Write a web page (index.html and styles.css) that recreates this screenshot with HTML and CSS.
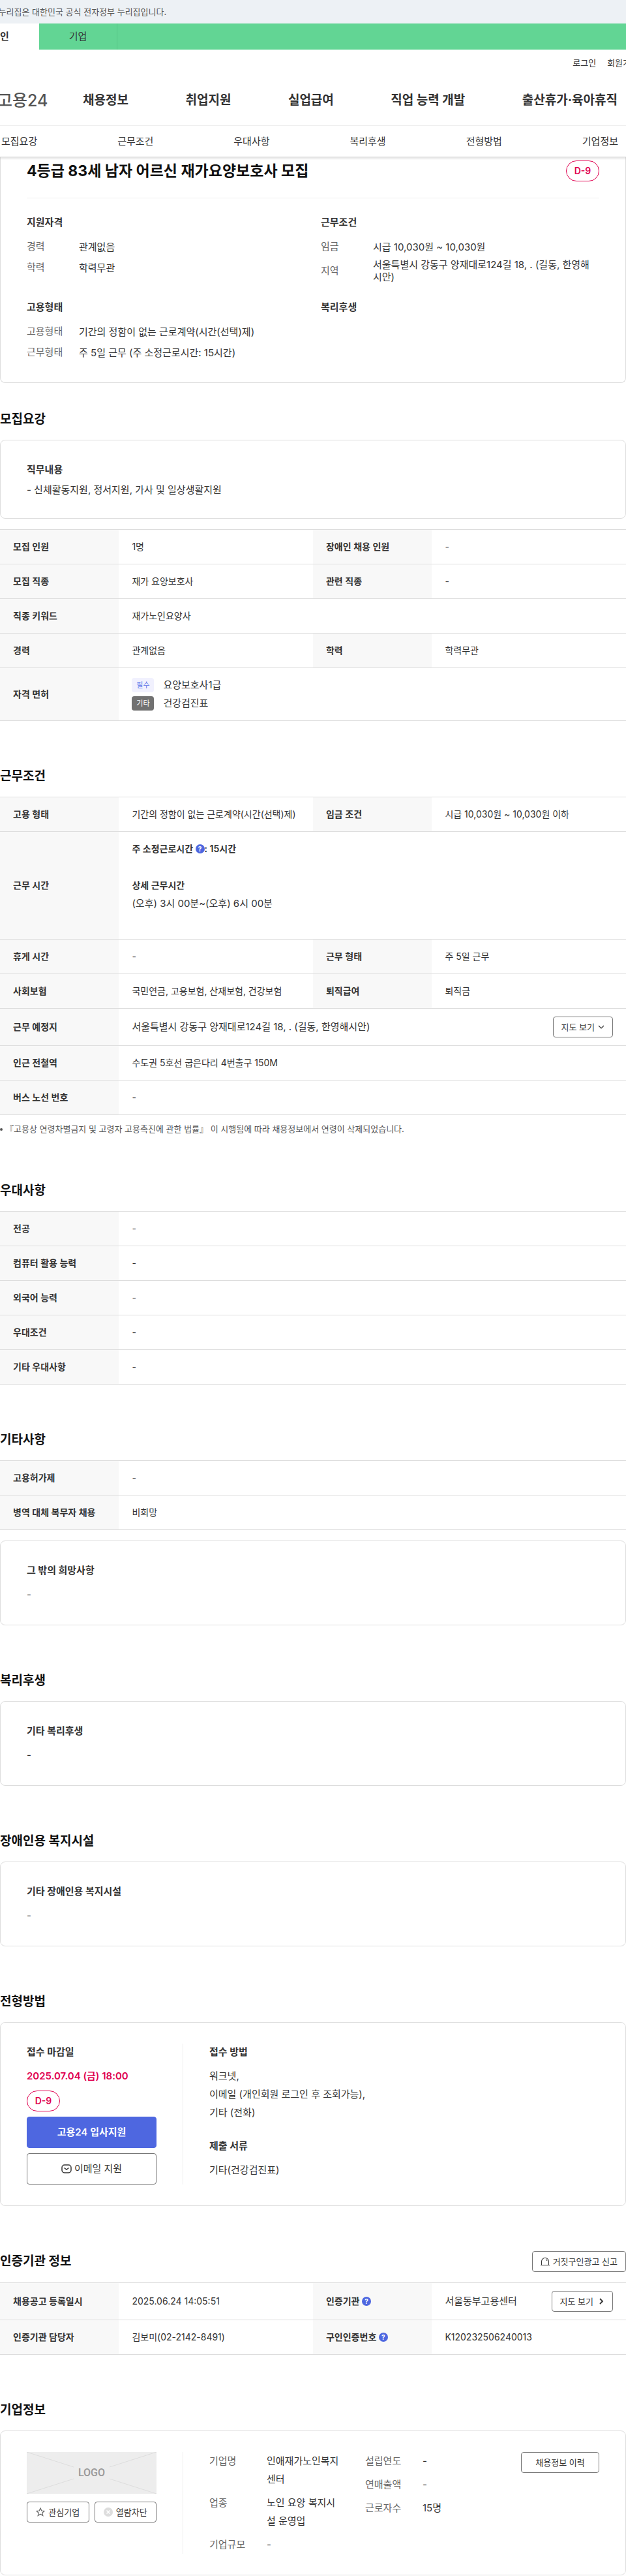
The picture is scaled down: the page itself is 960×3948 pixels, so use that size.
FILE: index.html
```
<!DOCTYPE html>
<html lang="ko">
<head>
    <meta charset="UTF-8">
    <meta name="viewport" content="width=device-width, initial-scale=1.0">
    <title>채용정보 상세 - 고용24</title>
    <link rel="stylesheet" href="styles.css">
</head>
<body>
    <header class="site-header">
        <p class="gov-banner">이 누리집은 대한민국 공식 전자정부 누리집입니다.</p>
        <div class="member-tabs">
            <a href="#" class="active">개인</a>
            <a href="#">기업</a>
        </div>
        <div class="util">
            <a href="#">로그인</a>
            <a href="#">회원가입</a>
        </div>
        <div class="gnb">
            <a href="#" class="logo">고용24</a>
            <nav>
                <a href="#">채용정보</a>
                <a href="#">취업지원</a>
                <a href="#">실업급여</a>
                <a href="#">직업 능력 개발</a>
                <a href="#">출산휴가·육아휴직</a>
            </nav>
        </div>
        <nav class="tab-nav">
            <a href="#recruit">모집요강</a>
            <a href="#condition">근무조건</a>
            <a href="#prefer">우대사항</a>
            <a href="#welfare">복리후생</a>
            <a href="#apply">전형방법</a>
            <a href="#company">기업정보</a>
        </nav>
    </header>

    <main>
        <!-- 공고 요약 -->
        <div class="box summary">
            <div class="summary-head">
                <h1>4등급 83세 남자 어르신 재가요양보호사 모집</h1>
                <span class="dday">D-9</span>
            </div>
            <div class="summary-grid">
                <div>
                    <h3>지원자격</h3>
                    <dl>
                        <div><dt>경력</dt><dd>관계없음</dd></div>
                        <div><dt>학력</dt><dd>학력무관</dd></div>
                    </dl>
                </div>
                <div>
                    <h3>근무조건</h3>
                    <dl>
                        <div><dt>임금</dt><dd>시급 10,030원 ~ 10,030원</dd></div>
                        <div><dt>지역</dt><dd>서울특별시 강동구 양재대로124길 18, . (길동, 한영해시안)</dd></div>
                    </dl>
                </div>
                <div>
                    <h3>고용형태</h3>
                    <dl>
                        <div><dt>고용형태</dt><dd>기간의 정함이 없는 근로계약(시간(선택)제)</dd></div>
                        <div><dt>근무형태</dt><dd>주 5일 근무 (주 소정근로시간: 15시간)</dd></div>
                    </dl>
                </div>
                <div>
                    <h3>복리후생</h3>
                </div>
            </div>
        </div>

        <section class="first" id="recruit">
            <div class="title"><h2>모집요강</h2></div>
            <div class="box">
                <h3>직무내용</h3>
                <p class="duty">- 신체활동지원, 정서지원, 가사 및 일상생활지원</p>
            </div>
            <table class="after-box">
                <colgroup><col class="c-th"><col class="c-td"><col class="c-th"><col class="c-td"></colgroup>
                <tr><th>모집 인원</th><td>1명</td><th>장애인 채용 인원</th><td>-</td></tr>
                <tr><th>모집 직종</th><td>재가 요양보호사</td><th>관련 직종</th><td>-</td></tr>
                <tr><th>직종 키워드</th><td colspan="3">재가노인요양사</td></tr>
                <tr><th>경력</th><td>관계없음</td><th>학력</th><td>학력무관</td></tr>
                <tr>
                    <th>자격 면허</th>
                    <td colspan="3">
                        <ul class="license">
                            <li><span class="tag">필수</span>요양보호사1급</li>
                            <li><span class="tag etc">기타</span>건강검진표</li>
                        </ul>
                    </td>
                </tr>
            </table>
        </section>

        <section id="condition">
            <div class="title"><h2>근무조건</h2></div>
            <table>
                <colgroup><col class="c-th"><col class="c-td"><col class="c-th"><col class="c-td"></colgroup>
                <tr><th>고용 형태</th><td>기간의 정함이 없는 근로계약(시간(선택)제)</td><th>임금 조건</th><td>시급 10,030원 ~ 10,030원 이하</td></tr>
                <tr>
                    <th>근무 시간</th>
                    <td colspan="3" class="hours">
                        <strong>주 소정근로시간 <button type="button" class="help" aria-label="도움말">?</button>: 15시간</strong>
                        <strong class="detail">상세 근무시간</strong>
                        <p>(오후) 3시 00분~(오후) 6시 00분</p>
                    </td>
                </tr>
                <tr><th>휴게 시간</th><td>-</td><th>근무 형태</th><td>주 5일 근무</td></tr>
                <tr><th>사회보험</th><td>국민연금, 고용보험, 산재보험, 건강보험</td><th>퇴직급여</th><td>퇴직금</td></tr>
                <tr>
                    <th>근무 예정지</th>
                    <td colspan="3">
                        <div class="with-btn">
                            <span>서울특별시 강동구 양재대로124길 18, . (길동, 한영해시안)</span>
                            <button type="button" class="btn">지도 보기
                                <svg width="10" height="10" viewBox="0 0 10 10"><path d="M1 3l4 4 4-4" fill="none" stroke="#333" stroke-width="1.2"/></svg>
                            </button>
                        </div>
                    </td>
                </tr>
                <tr><th>인근 전철역</th><td colspan="3">수도권 5호선 굽은다리 4번출구 150M</td></tr>
                <tr><th>버스 노선 번호</th><td colspan="3">-</td></tr>
            </table>
            <p class="note">『고용상 연령차별금지 및 고령자 고용촉진에 관한 법률』 이 시행됨에 따라 채용정보에서 연령이 삭제되었습니다.</p>
        </section>

        <section id="prefer">
            <div class="title"><h2>우대사항</h2></div>
            <table>
                <colgroup><col class="c-th"><col></colgroup>
                <tr><th>전공</th><td>-</td></tr>
                <tr><th>컴퓨터 활용 능력</th><td>-</td></tr>
                <tr><th>외국어 능력</th><td>-</td></tr>
                <tr><th>우대조건</th><td>-</td></tr>
                <tr><th>기타 우대사항</th><td>-</td></tr>
            </table>
        </section>

        <section>
            <div class="title"><h2>기타사항</h2></div>
            <table>
                <colgroup><col class="c-th"><col></colgroup>
                <tr><th>고용허가제</th><td>-</td></tr>
                <tr><th>병역 대체 복무자 채용</th><td>비희망</td></tr>
            </table>
            <div class="box after-table">
                <h3>그 밖의 희망사항</h3>
                <p>-</p>
            </div>
        </section>

        <section id="welfare">
            <div class="title"><h2>복리후생</h2></div>
            <div class="box">
                <h3>기타 복리후생</h3>
                <p>-</p>
            </div>
        </section>

        <section>
            <div class="title"><h2>장애인용 복지시설</h2></div>
            <div class="box">
                <h3>기타 장애인용 복지시설</h3>
                <p>-</p>
            </div>
        </section>

        <section id="apply">
            <div class="title"><h2>전형방법</h2></div>
            <div class="box split">
                <div class="side">
                    <h3>접수 마감일</h3>
                    <p class="deadline">2025.07.04 (금) 18:00</p>
                    <span class="dday">D-9</span>
                    <button type="button" class="btn-lg primary">고용24 입사지원</button>
                    <button type="button" class="btn-lg">
                        <svg width="16" height="14" viewBox="0 0 16 14" fill="none" stroke="#333" stroke-width="1.5"><rect x="1" y="1" width="14" height="12" rx="4"/><path d="M4.5 5.5L8 8l3.5-2.5"/></svg>
                        이메일 지원
                    </button>
                </div>
                <div class="main">
                    <h3>접수 방법</h3>
                    <p>워크넷,<br>이메일 (개인회원 로그인 후 조회가능),<br>기타 (전화)</p>
                    <h3 class="docs">제출 서류</h3>
                    <p>기타(건강검진표)</p>
                </div>
            </div>
        </section>

        <section>
            <div class="title">
                <h2>인증기관 정보</h2>
                <button type="button" class="btn">
                    <svg width="14" height="14" viewBox="0 0 14 14" fill="none" stroke="#333" stroke-width="1.1"><path d="M1.5 12.5V7a5.5 5.5 0 0 1 11 0v5.5M0 12.5h14M8 4a3 3 0 0 1 2 2"/></svg>
                    거짓구인광고 신고
                </button>
            </div>
            <table>
                <colgroup><col class="c-th"><col class="c-td"><col class="c-th"><col class="c-td"></colgroup>
                <tr>
                    <th>채용공고 등록일시</th>
                    <td>2025.06.24 14:05:51</td>
                    <th>인증기관 <button type="button" class="help" aria-label="도움말">?</button></th>
                    <td>
                        <div class="with-btn">
                            <span>서울동부고용센터</span>
                            <button type="button" class="btn">지도 보기
                                <svg width="12" height="10" viewBox="0 0 12 10"><path d="M5 1l4 4-4 4" fill="none" stroke="#333" stroke-width="1.8"/></svg>
                            </button>
                        </div>
                    </td>
                </tr>
                <tr>
                    <th>인증기관 담당자</th>
                    <td>김보미(02-2142-8491)</td>
                    <th>구인인증번호 <button type="button" class="help" aria-label="도움말">?</button></th>
                    <td>K120232506240013</td>
                </tr>
            </table>
        </section>

        <section id="company">
            <div class="title"><h2>기업정보</h2></div>
            <div class="box split">
                <div class="side">
                    <div class="company-logo">
                        <svg viewBox="0 0 199 64" preserveAspectRatio="none" stroke="#ddd" stroke-width="1">
                            <path d="M0 0l72 23M199 0l-72 23M0 64l72-23M199 64l-72-23"/>
                        </svg>
                        <span>LOGO</span>
                    </div>
                    <div class="company-btns">
                        <button type="button" class="btn">
                            <svg width="14" height="14" viewBox="0 0 14 14"><path d="M7 1l1.8 4 4.2.4-3.2 2.9 1 4.2L7 10.3l-3.8 2.200 1-4.200L1 5.400 5.200 5z" fill="none" stroke="#666" stroke-width="1.2"/></svg>
                            관심기업
                        </button>
                        <button type="button" class="btn">
                            <svg width="14" height="14" viewBox="0 0 14 14"><circle cx="7" cy="7" r="7" fill="#ddd"/><path d="M4.5 4.5l5 5M9.5 4.5l-5 5" stroke="#fff" stroke-width="1.5"/></svg>
                            열람차단
                        </button>
                    </div>
                </div>
                <div class="main company-info">
                    <dl>
                        <div><dt>기업명</dt><dd>인애재가노인복지센터</dd></div>
                        <div><dt>업종</dt><dd>노인 요양 복지시설 운영업</dd></div>
                        <div><dt>기업규모</dt><dd>-</dd></div>
                    </dl>
                    <dl>
                        <div><dt>설립연도</dt><dd>-</dd></div>
                        <div><dt>연매출액</dt><dd>-</dd></div>
                        <div><dt>근로자수</dt><dd>15명</dd></div>
                    </dl>
                    <button type="button" class="btn history">채용정보 이력</button>
                </div>
            </div>
        </section>
    </main>
</body>
</html>
```

FILE: styles.css
```
* {
    margin: 0;
    padding: 0;
    box-sizing: border-box;
}

body {
    font-family: Inter, "Noto Sans CJK KR", sans-serif;
    font-size: 15px;
    line-height: 28px;
    color: #333;
    background: #fff;
    overflow-x: hidden;
}

a {
    color: inherit;
    text-decoration: none;
}

ul {
    list-style: none;
}

button {
    font: inherit;
    color: inherit;
    cursor: pointer;
}

/* header */
.site-header {
    position: relative;
    overflow: hidden;
    border-bottom: 1px solid #ddd;
    box-shadow: 0 2px 3px rgba(0, 0, 0, 0.12);
}

.gov-banner {
    height: 36px;
    text-indent: -18px;
    line-height: 36px;
    font-size: 13px;
    color: #555;
    background: #edf1f5;
    white-space: nowrap;
}

.member-tabs {
    display: flex;
    height: 40px;
    background: #62d594;
}

.member-tabs a {
    width: 120px;
    line-height: 40px;
    text-align: center;
    border-right: 1px solid #56c587;
}

.member-tabs .active {
    margin-left: -60px;
    background: #fff;
    border-right: 0;
    font-weight: 700;
}

.util {
    display: flex;
    justify-content: flex-end;
    gap: 17px;
    height: 40px;
    margin-right: -19px;
    line-height: 40px;
    font-size: 13px;
    white-space: nowrap;
}

.gnb {
    display: flex;
    align-items: center;
    height: 77px;
    padding-right: 13px;
    border-bottom: 1px solid #eee;
}

.logo {
    width: 80px;
    margin-left: -4px;
    flex: none;
    font-size: 25px;
    font-weight: 500;
    color: #555;
    white-space: nowrap;
}

.gnb nav {
    display: flex;
    flex: 1;
    justify-content: space-between;
    margin-left: 51px;
    font-size: 19px;
    font-weight: 700;
    white-space: nowrap;
}

.tab-nav {
    display: flex;
    justify-content: space-between;
    height: 47px;
    padding: 0 12px 0 2px;
    line-height: 48px;
}

/* common */
.title {
    display: flex;
    justify-content: space-between;
    align-items: center;
    min-height: 31px;
    margin-bottom: 16px;
}

h1 {
    font-size: 23px;
    line-height: 32px;
    color: #111;
}

h2 {
    font-size: 19px;
    line-height: 28px;
    color: #111;
}

h3 {
    margin-bottom: 10px;
    font-size: 15px;
    line-height: 26px;
}

section {
    margin-top: 69px;
}

section.first {
    margin-top: 40px;
}

.box {
    padding: 32px 40px;
    border: 1px solid #ddd;
    border-radius: 8px;
}

.box .duty {
    margin-top: -4px;
    line-height: 23px;
}

.dday {
    display: inline-block;
    width: 51px;
    height: 32px;
    border: 1px solid #e0004f;
    border-radius: 16px;
    line-height: 30px;
    font-size: 14px;
    font-weight: 600;
    text-align: center;
    color: #e0004f;
}

.btn {
    display: inline-flex;
    align-items: center;
    justify-content: center;
    gap: 5px;
    height: 32px;
    padding: 0 12px;
    flex: none;
    border: 1px solid #777;
    border-radius: 4px;
    background: #fff;
    font-size: 13px;
    white-space: nowrap;
}

.help {
    width: 14px;
    height: 14px;
    border: 0;
    border-radius: 50%;
    background: #4e67e0;
    color: #fff;
    font-size: 10px;
    font-weight: 700;
    line-height: 14px;
    text-align: center;
    vertical-align: 1px;
}

/* summary */
.summary {
    padding-top: 5px;
    border-top: 0;
    border-radius: 0 0 8px 8px;
}

.summary-head {
    display: flex;
    justify-content: space-between;
    align-items: center;
    padding-bottom: 25px;
    border-bottom: 1px solid #eee;
}

.summary-grid {
    display: grid;
    grid-template-columns: 1fr 1fr;
    column-gap: 24px;
    row-gap: 24px;
    padding-top: 24px;
}

.summary dl {
    display: grid;
    row-gap: 4px;
}

.summary dl div {
    display: flex;
    align-items: center;
    min-height: 28px;
}

.summary dt {
    width: 80px;
    flex: none;
    color: #666;
}

.summary dd {
    padding-right: 12px;
    line-height: 19px;
    word-break: break-all;
}

/* tables */
table {
    width: 100%;
    border-collapse: collapse;
    table-layout: fixed;
    border-top: 1px solid #ddd;
    font-size: 14px;
}

.c-th {
    width: 19%;
}

.c-td {
    width: 31%;
}

th,
td {
    padding: 12px 20px;
    border-bottom: 1px solid #ddd;
    text-align: left;
}

th {
    background: #f8f8f8;
    font-weight: 600;
    white-space: nowrap;
}

.after-box,
.after-table {
    margin-top: 16px;
}

.license {
    font-size: 15px;
}

.license li {
    display: flex;
    align-items: center;
}

.tag {
    width: 34px;
    height: 22px;
    margin-right: 14px;
    border-radius: 4px;
    background: #f1f1fe;
    color: #5a72e8;
    font-size: 11px;
    line-height: 22px;
    text-align: center;
}

.tag.etc {
    background: #717171;
    color: #fff;
}

.hours strong {
    display: block;
    font-weight: 600;
}

.hours .detail {
    margin-top: 28px;
}

.hours p {
    margin-bottom: 28px;
    font-size: 15px;
}

.with-btn {
    display: flex;
    justify-content: space-between;
    align-items: center;
    font-size: 15px;
}

.note {
    position: relative;
    margin-top: 11px;
    padding-left: 8px;
    font-size: 13px;
    line-height: 20px;
    color: #555;
}

.note::before {
    content: "";
    position: absolute;
    left: 0;
    top: 9px;
    width: 4px;
    height: 4px;
    border-radius: 50%;
    background: #555;
}

/* apply, company */
.split {
    display: flex;
}

.split .side {
    width: 240px;
    padding-right: 40px;
    border-right: 1px solid #eee;
    flex: none;
}

.split .main {
    flex: 1;
    padding-left: 40px;
}

.deadline {
    margin-bottom: 8px;
    font-weight: 600;
    color: #e0004f;
}

.side .dday {
    display: block;
}

.btn-lg {
    display: flex;
    align-items: center;
    justify-content: center;
    gap: 4px;
    width: 100%;
    height: 48px;
    margin-top: 8px;
    border: 1px solid #777;
    border-radius: 4px;
    background: #fff;
    font-size: 15px;
}

.btn-lg.primary {
    border-color: #4e67e0;
    background: #4e67e0;
    color: #fff;
    font-weight: 600;
}

.docs {
    margin-top: 24px;
}

.company-logo {
    display: grid;
    place-items: center;
    height: 64px;
    background: #ededed;
}

.company-logo svg,
.company-logo span {
    grid-area: 1 / 1;
}

.company-logo svg {
    width: 100%;
    height: 64px;
}

.company-logo span {
    font-family: Roboto, sans-serif;
    font-size: 16px;
    font-weight: 500;
    color: #999;
}

.company-btns {
    display: flex;
    gap: 8px;
    margin-top: 12px;
}

.company-btns .btn {
    flex: 1;
    padding: 0;
}

.company-info {
    display: flex;
    align-items: flex-start;
}

.company-info dl {
    display: grid;
    row-gap: 8px;
    width: 200px;
    margin-right: 39px;
}

.company-info dl + dl {
    width: 160px;
    margin-right: 0;
}

.company-info dl div {
    display: flex;
}

.company-info dt {
    width: 88px;
    flex: none;
    color: #666;
}

.company-info dd {
    word-break: break-all;
}

.history {
    width: 120px;
    margin-left: auto;
}
```
